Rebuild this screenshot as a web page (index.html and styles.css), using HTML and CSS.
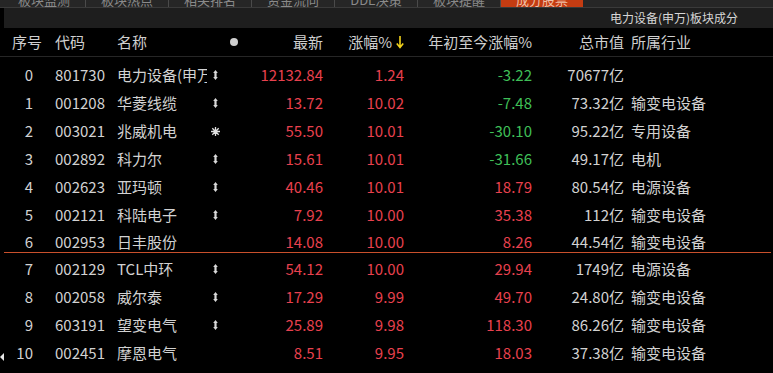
FILE: index.html
```html
<!DOCTYPE html>
<html lang="zh-CN">
<head>
  <meta charset="UTF-8" />
  <title>电力设备(申万)板块成分</title>
  <link rel="stylesheet" href="styles.css">
</head>
<body>
  <div class="tabs">
    <div class="tab">板块监测</div>
    <div class="tab">板块热点</div>
    <div class="tab">相关排名</div>
    <div class="tab">资金流向</div>
    <div class="tab">DDE决策</div>
    <div class="tab">板块提醒</div>
    <div class="tab active">成分股票</div>
  </div>

  <div class="title-bar">电力设备(申万)板块成分</div>

  <div class="grid-row head">
    <div class="c-no">序号</div>
    <div class="c-code">代码</div>
    <div class="c-name">名称</div>
    <div class="c-flag"><span class="dot"></span></div>
    <div class="c-num">最新</div>
    <div class="c-num sort">涨幅%
      <svg class="arrow" width="8" height="13" viewBox="0 0 8 13"><path d="M4 0 V11 M0.8 7.5 L4 11.5 L7.2 7.5" fill="none" stroke="#f2d21b" stroke-width="1.6"/></svg>
    </div>
    <div class="c-num">年初至今涨幅%</div>
    <div class="c-num">总市值</div>
    <div class="c-ind">所属行业</div>
  </div>

  <div class="list">
    <div class="grid-row">
      <div class="c-no">0</div><div class="c-code">801730</div><div class="c-name">电力设备(申万)</div>
      <div class="c-flag"><svg class="mark" width="5" height="10" viewBox="0 0 5 10"><path d="M2.5 0 L4.8 3 L3.6 3 L3.6 7 L4.8 7 L2.5 10 L0.2 7 L1.4 7 L1.4 3 L0.2 3 Z"/></svg></div>
      <div class="c-num up">12132.84</div><div class="c-num up">1.24</div><div class="c-num down">-3.22</div>
      <div class="c-num">70677亿</div><div class="c-ind"></div>
    </div>
    <div class="grid-row">
      <div class="c-no">1</div><div class="c-code">001208</div><div class="c-name">华菱线缆</div>
      <div class="c-flag"><svg class="mark" width="5" height="10" viewBox="0 0 5 10"><path d="M2.5 0 L4.8 3 L3.6 3 L3.6 7 L4.8 7 L2.5 10 L0.2 7 L1.4 7 L1.4 3 L0.2 3 Z"/></svg></div>
      <div class="c-num up">13.72</div><div class="c-num up">10.02</div><div class="c-num down">-7.48</div>
      <div class="c-num">73.32亿</div><div class="c-ind">输变电设备</div>
    </div>
    <div class="grid-row">
      <div class="c-no">2</div><div class="c-code">003021</div><div class="c-name">兆威机电</div>
      <div class="c-flag"><svg class="star" width="9" height="9" viewBox="0 0 9 9"><path d="M4.5 0 V9 M0 4.5 H9 M1.3 1.3 L7.7 7.7 M7.7 1.3 L1.3 7.7"/></svg></div>
      <div class="c-num up">55.50</div><div class="c-num up">10.01</div><div class="c-num down">-30.10</div>
      <div class="c-num">95.22亿</div><div class="c-ind">专用设备</div>
    </div>
    <div class="grid-row">
      <div class="c-no">3</div><div class="c-code">002892</div><div class="c-name">科力尔</div>
      <div class="c-flag"><svg class="mark" width="5" height="10" viewBox="0 0 5 10"><path d="M2.5 0 L4.8 3 L3.6 3 L3.6 7 L4.8 7 L2.5 10 L0.2 7 L1.4 7 L1.4 3 L0.2 3 Z"/></svg></div>
      <div class="c-num up">15.61</div><div class="c-num up">10.01</div><div class="c-num down">-31.66</div>
      <div class="c-num">49.17亿</div><div class="c-ind">电机</div>
    </div>
    <div class="grid-row">
      <div class="c-no">4</div><div class="c-code">002623</div><div class="c-name">亚玛顿</div>
      <div class="c-flag"><svg class="mark" width="5" height="10" viewBox="0 0 5 10"><path d="M2.5 0 L4.8 3 L3.6 3 L3.6 7 L4.8 7 L2.5 10 L0.2 7 L1.4 7 L1.4 3 L0.2 3 Z"/></svg></div>
      <div class="c-num up">40.46</div><div class="c-num up">10.01</div><div class="c-num up">18.79</div>
      <div class="c-num">80.54亿</div><div class="c-ind">电源设备</div>
    </div>
    <div class="grid-row">
      <div class="c-no">5</div><div class="c-code">002121</div><div class="c-name">科陆电子</div>
      <div class="c-flag"><svg class="mark" width="5" height="10" viewBox="0 0 5 10"><path d="M2.5 0 L4.8 3 L3.6 3 L3.6 7 L4.8 7 L2.5 10 L0.2 7 L1.4 7 L1.4 3 L0.2 3 Z"/></svg></div>
      <div class="c-num up">7.92</div><div class="c-num up">10.00</div><div class="c-num up">35.38</div>
      <div class="c-num">112亿</div><div class="c-ind">输变电设备</div>
    </div>
    <div class="grid-row split">
      <div class="c-no">6</div><div class="c-code">002953</div><div class="c-name">日丰股份</div>
      <div class="c-flag"></div>
      <div class="c-num up">14.08</div><div class="c-num up">10.00</div><div class="c-num up">8.26</div>
      <div class="c-num">44.54亿</div><div class="c-ind">输变电设备</div>
    </div>
    <div class="grid-row after-split">
      <div class="c-no">7</div><div class="c-code">002129</div><div class="c-name">TCL中环</div>
      <div class="c-flag"><svg class="mark" width="5" height="10" viewBox="0 0 5 10"><path d="M2.5 0 L4.8 3 L3.6 3 L3.6 7 L4.8 7 L2.5 10 L0.2 7 L1.4 7 L1.4 3 L0.2 3 Z"/></svg></div>
      <div class="c-num up">54.12</div><div class="c-num up">10.00</div><div class="c-num up">29.94</div>
      <div class="c-num">1749亿</div><div class="c-ind">电源设备</div>
    </div>
    <div class="grid-row">
      <div class="c-no">8</div><div class="c-code">002058</div><div class="c-name">威尔泰</div>
      <div class="c-flag"><svg class="mark" width="5" height="10" viewBox="0 0 5 10"><path d="M2.5 0 L4.8 3 L3.6 3 L3.6 7 L4.8 7 L2.5 10 L0.2 7 L1.4 7 L1.4 3 L0.2 3 Z"/></svg></div>
      <div class="c-num up">17.29</div><div class="c-num up">9.99</div><div class="c-num up">49.70</div>
      <div class="c-num">24.80亿</div><div class="c-ind">输变电设备</div>
    </div>
    <div class="grid-row">
      <div class="c-no">9</div><div class="c-code">603191</div><div class="c-name">望变电气</div>
      <div class="c-flag"><svg class="mark" width="5" height="10" viewBox="0 0 5 10"><path d="M2.5 0 L4.8 3 L3.6 3 L3.6 7 L4.8 7 L2.5 10 L0.2 7 L1.4 7 L1.4 3 L0.2 3 Z"/></svg></div>
      <div class="c-num up">25.89</div><div class="c-num up">9.98</div><div class="c-num up">118.30</div>
      <div class="c-num">86.26亿</div><div class="c-ind">输变电设备</div>
    </div>
    <div class="grid-row">
      <div class="c-no">10</div><div class="c-code">002451</div><div class="c-name">摩恩电气</div>
      <div class="c-flag"></div>
      <div class="c-num up">8.51</div><div class="c-num up">9.95</div><div class="c-num up">18.03</div>
      <div class="c-num">37.38亿</div><div class="c-ind">输变电设备</div>
    </div>
    <span class="edge-arrow"></span>
  </div>
</body>
</html>
```

FILE: styles.css
```css
body {
  margin: 0;
  background: #000;
  color: #d2d2d2;
  font-family: "Noto Sans CJK SC", "Noto Sans", sans-serif;
  font-size: 15px;
  overflow: hidden;
}

.tabs {
  display: flex;
  height: 7px;
  padding-left: 3px;
  background: #262626;
  border-bottom: 1px solid #3a3a3a;
  overflow: hidden;
}

.tab {
  width: 82px;
  border-right: 1px solid #4a4a4a;
  color: #8a8a8a;
  font-size: 13px;
  line-height: 13px;
  margin-top: -7px;
  padding-top: 0;
  text-align: center;
  overflow: hidden;
}

.tab.active {
  background: #c43c12;
  color: #f0c0a8;
  border-right: none;
}

.title-bar {
  height: 20px;
  margin-left: 4px;
  background: #1e1e1e;
  color: #d6d6d6;
  font-size: 12px;
  line-height: 20px;
  text-align: right;
  padding-right: 35px;
}

.grid-row {
  display: grid;
  grid-template-columns: 55px 62px 90px 40px 76px 81px 128px 92px 1fr;
  align-items: center;
  height: 28px;
  line-height: 20px;
  white-space: nowrap;
}

.grid-row.head {
  color: #cfcfcf;
  border-bottom: 1px solid #262626;
}

.list {
  position: relative;
  padding-top: 4px;
}

.c-no {
  text-align: right;
  padding-right: 22px;
}

.head .c-no {
  text-align: left;
  padding-left: 12px;
  padding-right: 0;
}

.c-name {
  overflow: hidden;
}

.c-flag {
  display: flex;
  align-items: center;
  padding-left: 6px;
}

.head .c-flag {
  padding-left: 23px;
}

.dot {
  width: 8px;
  height: 8px;
  border-radius: 50%;
  background: #cfcfcf;
}

.mark {
  fill: #d8d8d8;
}

.star {
  stroke: #e0e0e0;
  stroke-width: 1.3;
  margin-left: -2px;
}

.c-num {
  text-align: right;
}

.sort {
  display: flex;
  justify-content: flex-end;
  align-items: center;
  gap: 4px;
}

.c-ind {
  padding-left: 7px;
}

.up {
  color: #e8414e;
}

.down {
  color: #3fbf57;
}

.grid-row.split {
  height: 24px;
  align-items: start;
  padding-top: 3px;
  box-sizing: border-box;
  border-bottom: 1px solid #c9502c;
  margin-left: 4px;
  margin-right: 2px;
  grid-template-columns: 51px 62px 90px 40px 76px 81px 128px 92px 1fr;
}

.grid-row.after-split {
  margin-top: 2px;
}

.edge-arrow {
  position: absolute;
  left: 0;
  bottom: 6px;
  width: 0;
  height: 0;
  border-top: 4px solid transparent;
  border-bottom: 4px solid transparent;
  border-right: 4px solid #e8e8e8;
}
```
